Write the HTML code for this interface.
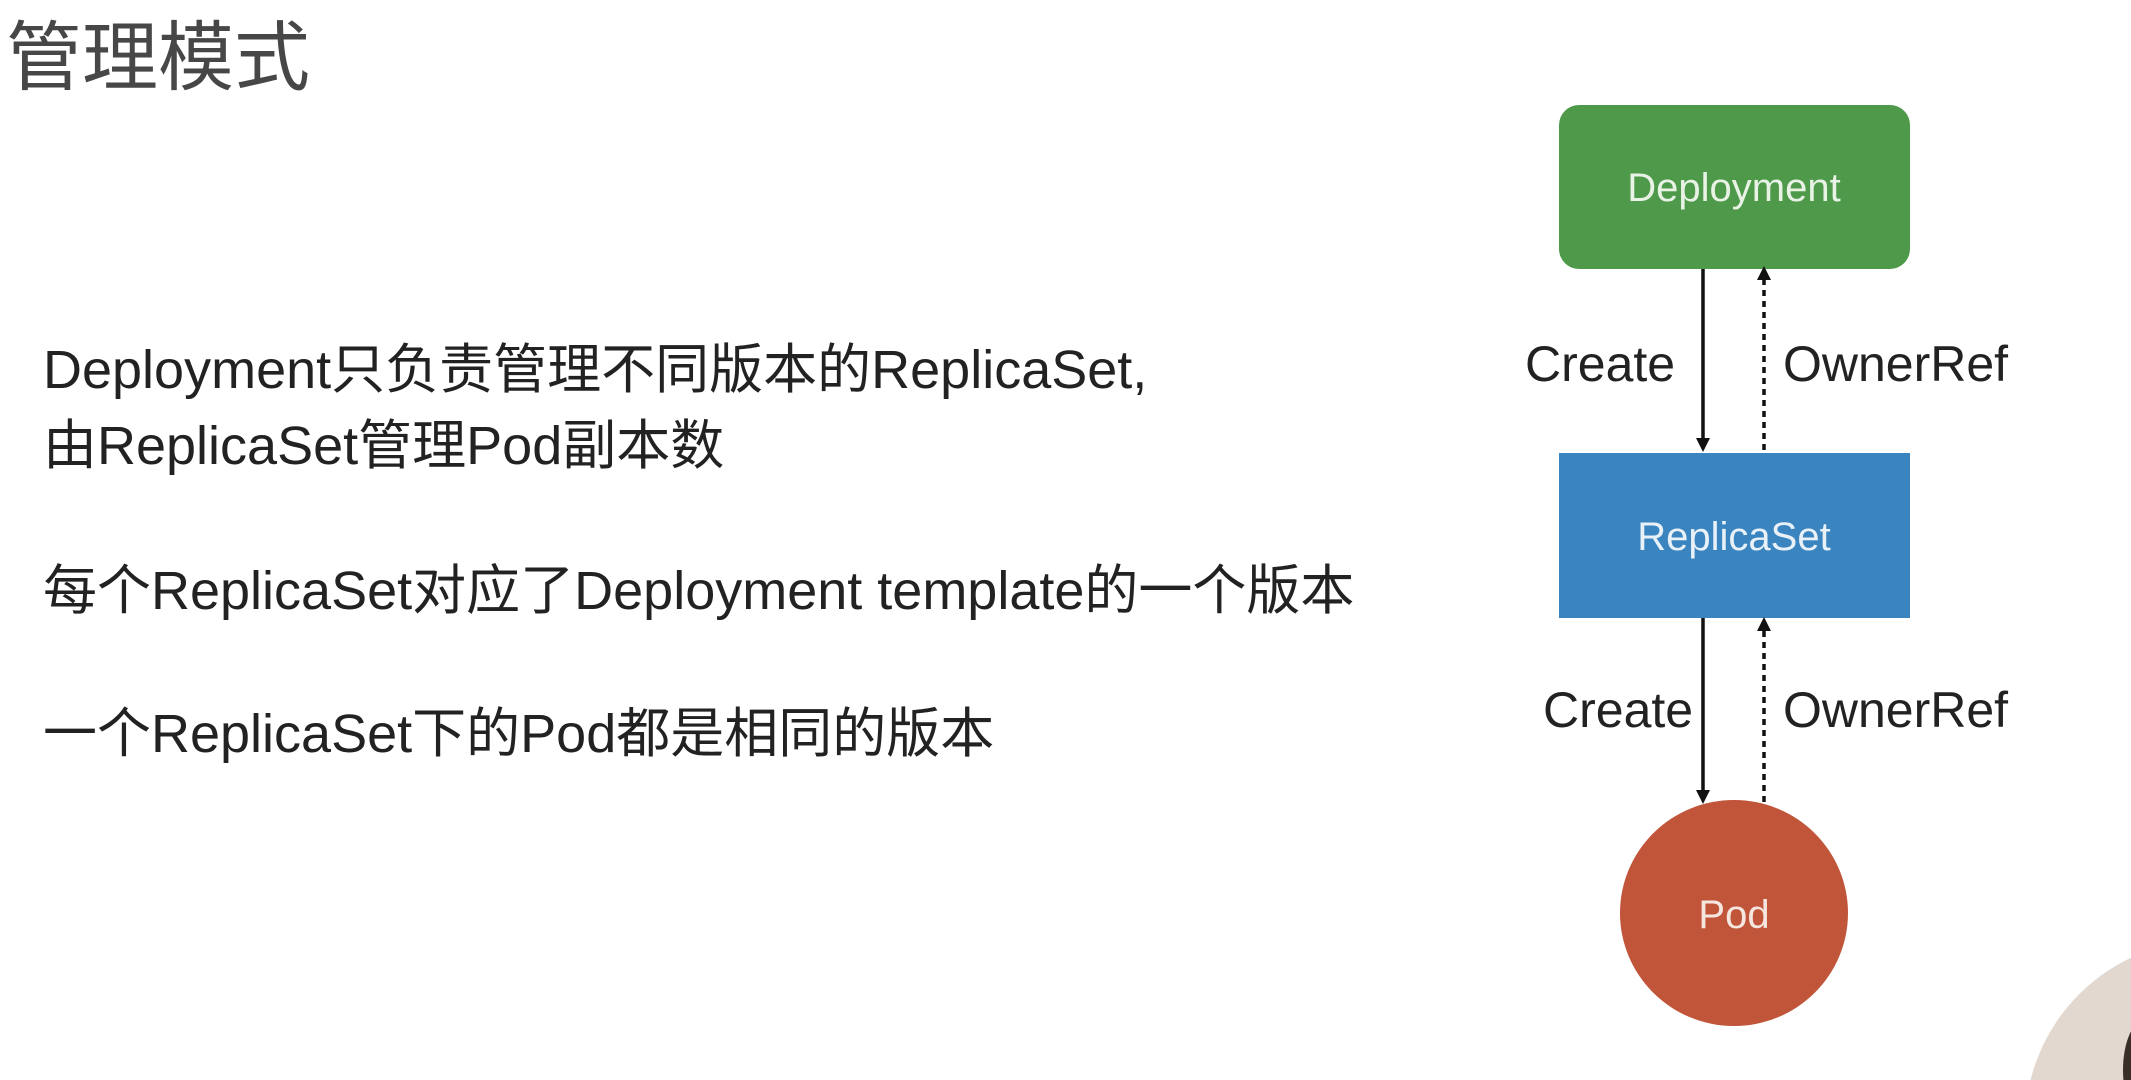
<!DOCTYPE html>
<html><head><meta charset="utf-8"><style>
html,body{margin:0;padding:0;background:#fff;overflow:hidden;}
body{width:2131px;height:1080px;position:relative;overflow:hidden;font-family:"Liberation Sans","Noto Sans CJK SC",sans-serif;}
.t{position:absolute;white-space:nowrap;}
.title{left:6px;top:-4px;font-size:76px;color:#474747;}
.b{left:43px;font-size:54px;color:#222;}
</style></head><body>
<div class="t title">管理模式</div>
<div class="t b" style="top:325px">Deployment只负责管理不同版本的ReplicaSet,</div>
<div class="t b" style="top:401px">由ReplicaSet管理Pod副本数</div>
<div class="t b" style="top:546px">每个ReplicaSet对应了Deployment template的一个版本</div>
<div class="t b" style="top:689px">一个ReplicaSet下的Pod都是相同的版本</div>
<svg width="2131" height="1080" style="position:absolute;left:0;top:0;display:block" font-family="Liberation Sans, sans-serif">
<rect x="1559" y="105" width="351" height="164" rx="20" fill="#4f994b"/>
<text x="1734" y="201" font-size="40" fill="#e8f3e6" text-anchor="middle">Deployment</text>
<rect x="1559" y="453" width="351" height="165" fill="#3a84bf"/>
<text x="1734" y="550" font-size="40" fill="#e8f0f8" text-anchor="middle">ReplicaSet</text>
<ellipse cx="1734" cy="913" rx="114" ry="113" fill="#c1553a"/>
<text x="1734" y="928" font-size="40" fill="#f6e6e0" text-anchor="middle">Pod</text>
<g stroke="#111" stroke-width="3.5">
<line x1="1703" y1="269" x2="1703" y2="440"/>
<line x1="1703" y1="618" x2="1703" y2="792"/>
<line x1="1764" y1="450" x2="1764" y2="280" stroke-dasharray="6 5"/>
<line x1="1764" y1="802" x2="1764" y2="630" stroke-dasharray="6 5"/>
</g>
<g fill="#111">
<path d="M1696 438 L1710 438 L1703 452 Z"/>
<path d="M1696 790 L1710 790 L1703 804 Z"/>
<path d="M1757 280 L1771 280 L1764 266 Z"/>
<path d="M1757 631 L1771 631 L1764 617 Z"/>
</g>
<g font-size="50" fill="#222">
<text x="1525" y="381">Create</text>
<text x="1783" y="381">OwnerRef</text>
<text x="1543" y="727">Create</text>
<text x="1783" y="727">OwnerRef</text>
</g>
<circle cx="2210" cy="1125" r="185" fill="#e2d8cf"/>
<ellipse cx="2145" cy="1070" rx="22" ry="50" fill="#3a2e28"/>
</svg>
</body></html>
